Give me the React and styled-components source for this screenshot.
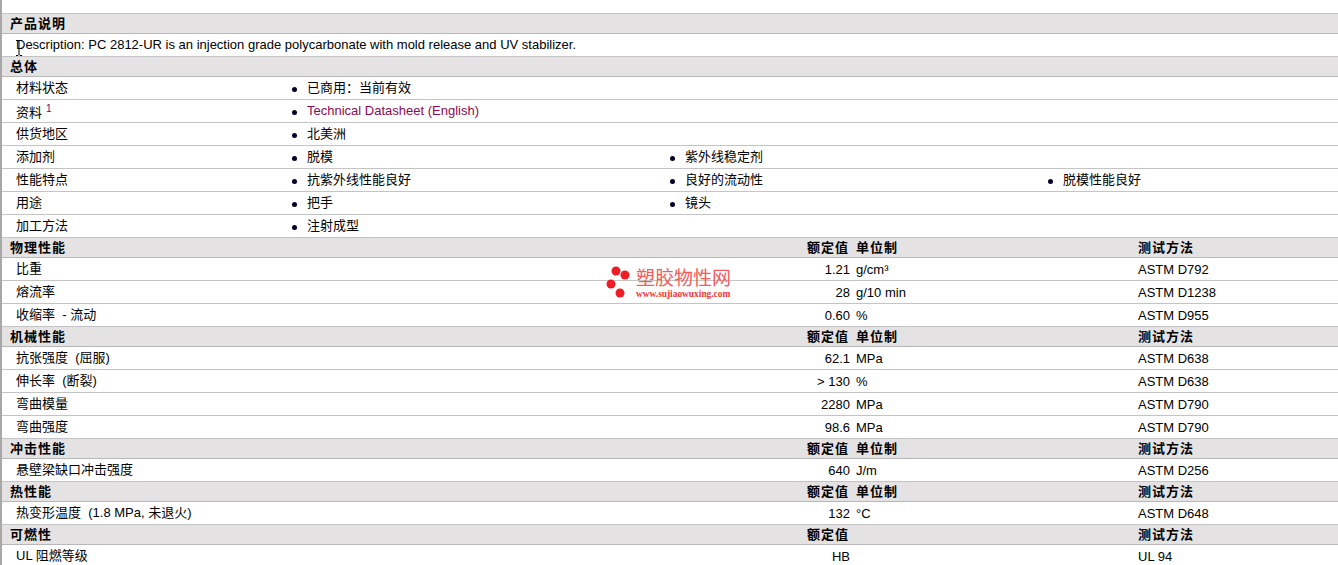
import React from 'react'
import styled, { createGlobalStyle } from 'styled-components'

const Global = createGlobalStyle`
  html, body { margin: 0; padding: 0; background: #fff; overflow: hidden; }
  body { font-family: "Liberation Sans", "Noto Sans CJK SC", sans-serif; font-size: 13px; color: #000; }
`

const Page = styled.div`
  position: relative;
  height: 565px;
  overflow: hidden;
  padding-top: 13px;
  box-sizing: border-box;
  border-left: 2px solid #a8a8a8;
`

const Header = styled.div`
  display: grid;
  grid-template-columns: 797px 49px 282px 1fr;
  height: ${p => (p.$first ? '21px' : '20px')};
  line-height: 19px;
  box-sizing: border-box;
  border-top: ${p => (p.$first ? '1px solid #c4c4c4' : 'none')};
  border-bottom: 1px solid #b8b8b8;
  background: #e4e2e2;
  padding-left: 8px;
  font-weight: bold;
  font-size: 13px;
  letter-spacing: 1px;
`

const Row = styled.div`
  display: grid;
  grid-template-columns: ${p => p.$cols || '275px 378px 378px 1fr'};
  height: 23px;
  line-height: 22px;
  box-sizing: border-box;
  border-bottom: 1px solid #c4c4c4;
  padding-left: 14px;
`

const PropRow = styled(Row)`
  grid-template-columns: 640px 200px 282px 1fr;
  line-height: 24px;
`

const Name = styled.span`
  line-height: ${p => (p.$note ? '26px' : '22px')};
  white-space: pre;
`

const Value = styled.span`
  text-align: right;
  padding-right: 6px;
`

const Item = styled.span`
  position: relative;
  padding-left: 16px;
  &::before {
    content: '';
    position: absolute;
    left: 1px;
    top: 10px;
    width: 5px;
    height: 5px;
    border-radius: 50%;
    background: #000028;
  }
`

const Link = styled.span`
  color: #8a0a55;
`

const Sup = styled.sup`
  color: #5a0a70;
  font-size: 10px;
  line-height: 0;
  margin-left: 4px;
`

const Watermark = styled.div`
  position: absolute;
  left: 604px;
  top: 266px;
  display: flex;
  align-items: flex-start;
  gap: 6px;
`

const MarkText = styled.div`
  display: flex;
  flex-direction: column;
  margin-top: 3px;
`

const MarkTitle = styled.span`
  font-size: 19px;
  line-height: 20px;
  color: #f25c5c;
`

const MarkUrl = styled.span`
  font-family: "Liberation Serif", serif;
  font-size: 9.4px;
  line-height: 10px;
  font-weight: bold;
  color: #ee3a3a;
`

const Cursor = styled.svg`
  position: absolute;
  left: 13px;
  top: 40px;
`

const general = [
  ['材料状态', ['已商用：当前有效']],
  ['资料', [<Link>Technical Datasheet (English)</Link>], true],
  ['供货地区', ['北美洲']],
  ['添加剂', ['脱模', '紫外线稳定剂']],
  ['性能特点', ['抗紫外线性能良好', '良好的流动性', '脱模性能良好']],
  ['用途', ['把手', '镜头']],
  ['加工方法', ['注射成型']],
]

const sections = [
  { title: '物理性能', unit: '单位制', rows: [
    ['比重', '1.21', 'g/cm³', 'ASTM D792'],
    ['熔流率', '28', 'g/10 min', 'ASTM D1238'],
    ['收缩率  - 流动', '0.60', '%', 'ASTM D955'],
  ] },
  { title: '机械性能', unit: '单位制', rows: [
    ['抗张强度  (屈服)', '62.1', 'MPa', 'ASTM D638'],
    ['伸长率  (断裂)', '> 130', '%', 'ASTM D638'],
    ['弯曲模量', '2280', 'MPa', 'ASTM D790'],
    ['弯曲强度', '98.6', 'MPa', 'ASTM D790'],
  ] },
  { title: '冲击性能', unit: '单位制', rows: [
    ['悬壁梁缺口冲击强度', '640', 'J/m', 'ASTM D256'],
  ] },
  { title: '热性能', unit: '单位制', rows: [
    ['热变形温度  (1.8 MPa, 未退火)', '132', '°C', 'ASTM D648'],
  ] },
  { title: '可燃性', unit: '', rows: [
    ['UL 阻燃等级', 'HB', '', 'UL 94'],
  ] },
]

export default function App() {
  return (
    <Page>
      <Global />
      <Header $first><span>产品说明</span></Header>
      <Row $cols="1fr">Description: PC 2812-UR is an injection grade polycarbonate with mold release and UV stabilizer.</Row>
      <Header><span>总体</span></Header>
      {general.map(([name, items, note]) => (
        <Row key={name}>
          <Name $note={note}>{name}{note && <Sup>1</Sup>}</Name>
          {items.map((it, i) => <Item key={i}>{it}</Item>)}
        </Row>
      ))}
      {sections.map(s => (
        <React.Fragment key={s.title}>
          <Header>
            <span>{s.title}</span>
            <span>额定值</span>
            <span>{s.unit}</span>
            <span>测试方法</span>
          </Header>
          {s.rows.map(r => (
            <PropRow key={r[0]}>
              <Name>{r[0]}</Name>
              <Value>{r[1]}</Value>
              <span>{r[2]}</span>
              <span>{r[3]}</span>
            </PropRow>
          ))}
        </React.Fragment>
      ))}
      <Watermark>
        <svg width="24" height="33" viewBox="0 0 24 33">
          <circle cx="10" cy="5" r="4.5" fill="#ee1c25" />
          <circle cx="19" cy="9" r="4.5" fill="#ee1c25" />
          <circle cx="5" cy="18" r="4.5" fill="#ee1c25" />
          <circle cx="14" cy="27" r="4.5" fill="#ee1c25" />
        </svg>
        <MarkText>
          <MarkTitle>塑胶物性网</MarkTitle>
          <MarkUrl>www.sujiaowuxing.com</MarkUrl>
        </MarkText>
      </Watermark>
      <Cursor width="8" height="16" viewBox="0 0 8 16">
        <path d="M1 .5h2l1 1 1-1h2M4 1.5v13M1 15.5h2l1-1 1 1h2" fill="none" stroke="#000" strokeWidth="1" />
      </Cursor>
    </Page>
  )
}
